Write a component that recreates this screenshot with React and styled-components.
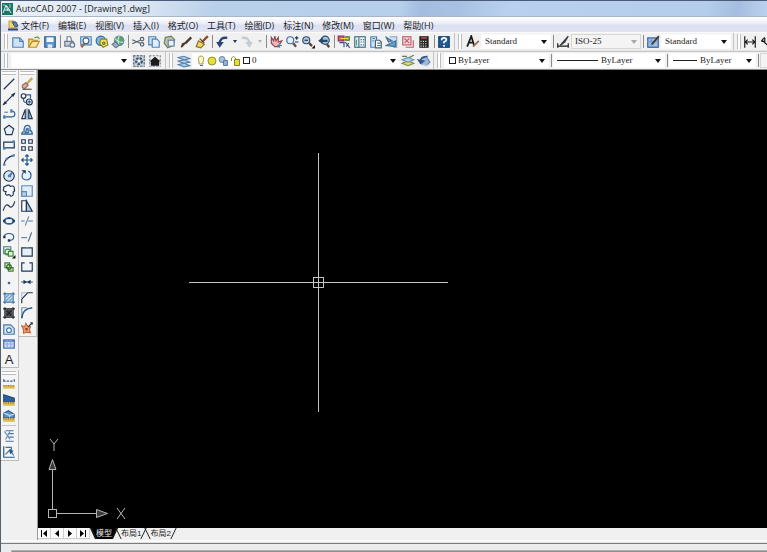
import React from "react";
import styled, { createGlobalStyle, css } from "styled-components";

const GlobalStyle = createGlobalStyle`
  * {
    box-sizing: border-box;
  }

  body {
    margin: 0;
    background: #f0f0f0;
    font-family: "Open Sans", "Noto Sans CJK SC", sans-serif;
    color: #1c1c1c;
  }
`;

const Window = styled.div`
  display: flex;
  flex-direction: column;
  height: 100vh;
  overflow: hidden;
  border-left: 1px solid #55606e;
  background: #f0f0f0;
`;

const TitleBar = styled.header`
  display: flex;
  align-items: center;
  gap: 3px;
  flex: none;
  height: 17px;
  padding-left: 1px;
  border-top: 1px solid #4a5c78;
  border-bottom: 1px solid #a9b6c8;
  background: linear-gradient(
    100deg,
    #e9f0f7 0%,
    #dce7f3 18%,
    #b9d0ea 28%,
    #b6cfeb 52%,
    #a3bcdf 55%,
    #a9c2e4 60%,
    #b9d1ee 66%,
    #b4cdeb 92%,
    #a5bde0 96%,
    #bcd2ee 100%
  );
`;

const Title = styled.h1`
  margin: 0;
  font-size: 9px;
  line-height: 14px;
  font-weight: 400;
  white-space: nowrap;
`;

const MenuBar = styled.nav`
  display: flex;
  align-items: center;
  flex: none;
  gap: 9px;
  height: 15px;
  padding-left: 7px;
  border-top: 2px solid #ffffff;
  background: linear-gradient(#f8f9fd 0, #eef1f9 30%, #dce1f1 50%, #dfe3f2 100%);
`;

const MenuItem = styled.button`
  padding: 0;
  border: 0;
  background: none;
  color: #1c1c1c;
  font-family: inherit;
  font-size: 9px;
  line-height: 12px;
  white-space: nowrap;
`;

const MenuIcon = styled.span`
  display: flex;
  margin-right: -7px;
`;

const ToolbarRow = styled.div`
  display: flex;
  align-items: center;
  flex: none;
  height: 19px;
  overflow: hidden;
  border-top: 1px solid ${(p) => (p.$line ? "#c6c6c6" : "#fafafa")};
  border-bottom: 1px solid ${(p) => (p.$line ? "#8e8e8e" : "#e4e4e4")};
  background: #f1f1f1;
`;

const Toolbar = styled.div`
  display: flex;
  align-items: center;
  flex: none;
  height: 17px;
  padding-right: ${(p) => p.$end || 2}px;
  border-right: 1px solid #c4c4c4;
`;

const Grip = styled.span`
  flex: none;
  width: 4px;
  height: 15px;
  margin: 0 ${(p) => p.$after || 3}px 0 3px;
  border: solid #bdbdbd;
  border-width: 0 1px;
  background: #ffffff;
`;

const Separator = styled.span`
  flex: none;
  width: 1px;
  height: 13px;
  margin: 0 1px 0 2px;
  background: #8a8a8a;
`;

const ToolButton = styled.button`
  display: flex;
  align-items: center;
  justify-content: center;
  flex: none;
  width: ${(p) => (p.$narrow ? 9 : 16)}px;
  height: ${(p) => (p.$fill ? "100%" : "15px")};
  padding: 0;
  border: 0;
  background: none;
  color: #223a5c;
  opacity: ${(p) => (p.$dim ? 0.4 : 1)};
`;

const Combo = styled.div`
  display: flex;
  align-items: center;
  flex: none;
  gap: 1px;
  width: ${(p) => p.$width}px;
  height: 15px;
  padding: 0 3px;
  border: 1px solid ${(p) => (p.$muted ? "#d6d6d6" : "#fbfbfb")};
  background: ${(p) => (p.$muted ? "#f4f4f4" : "#ffffff")};
`;

const Select = styled.select`
  appearance: none;
  flex: 1;
  min-width: 0;
  height: 13px;
  padding: 0;
  border: 0;
  background: none;
  color: #1c1c1c;
  font-family: "Liberation Serif", serif;
  font-size: 9px;
  line-height: 13px;
  opacity: 1;
`;

const Svg = styled.svg`
  display: block;
  flex: none;
  fill: none;
  stroke: currentColor;
  stroke-width: 1;
`;

const Body = styled.div`
  display: flex;
  flex: 1;
  min-height: 0;
`;

const SideBars = styled.aside`
  display: flex;
  align-items: flex-start;
  flex: none;
  width: 37px;
  border-right: 1px solid #9a9a9a;
  background: #f0f0f0;
`;

const SideColumn = styled.div`
  display: flex;
  flex-direction: column;
  gap: 2px;
  width: 18px;
`;

const SidePanel = styled.div`
  display: flex;
  flex-direction: column;
  align-items: flex-start;
  border: solid #bcbcbc;
  border-width: 0 1px 1px 0;
  background: #f4f4f4;
`;

const SideGrip = styled.span`
  width: 14px;
  height: 4px;
  margin: 1px;
  border: solid #bdbdbd;
  border-width: 1px 0;
  background: #ffffff;
`;

const SideTools = styled.div`
  display: grid;
  grid-auto-rows: 1fr;
  height: ${(p) => p.$height}px;
`;

const SideLine = styled.span`
  width: 14px;
  height: 1px;
  margin: 1px 1px 2px;
  background: #c4c4c4;
`;

const TextGlyph = styled.span`
  color: #1c1c1c;
  font-family: "Liberation Sans", sans-serif;
  font-size: 13px;
  line-height: 15px;
`;

const Workspace = styled.main`
  display: flex;
  flex-direction: column;
  flex: 1;
  min-width: 0;
`;

const Canvas = styled.div`
  position: relative;
  flex: 1;
  overflow: hidden;
  background: #000000;
`;

const Crosshair = styled.svg`
  position: absolute;
  left: 150px;
  top: 82px;
`;

const UcsIcon = styled.svg`
  position: absolute;
  left: 8px;
  bottom: 7px;
`;

const TabBar = styled.div`
  display: flex;
  flex: none;
  height: 12px;
  background: #f0f0f0;
`;

const TabNav = styled.button`
  display: flex;
  align-items: center;
  justify-content: center;
  width: 13px;
  height: 11px;
  padding: 0;
  border: solid #cfcfcf;
  border-width: 0 1px 1px 0;
  background: #fafafa;
  color: #000000;
`;

const Tab = styled.button`
  position: relative;
  height: 11px;
  margin-right: -3px;
  padding: 0 6px;
  border: 0;
  background: none;
  color: #1c1c1c;
  font-family: "Liberation Sans", "Noto Sans CJK SC", sans-serif;
  font-size: 8px;
  line-height: 10px;
  white-space: nowrap;

  &::before,
  &::after {
    content: "";
    position: absolute;
    top: 0;
    bottom: 0;
    width: 1px;
    background: #222222;
  }

  &::before {
    left: 3px;
    transform: skewX(26deg);
  }

  &::after {
    right: 3px;
    transform: skewX(-26deg);
  }

  ${(p) =>
    p.$active &&
    css`
      background: #000000;
      color: #e8e8e8;
      clip-path: polygon(0 0, 100% 0, calc(100% - 5px) 100%, 5px 100%);
    `}
`;

const CommandArea = styled.footer`
  flex: none;
  height: 12px;
  border-top: 2px solid #fafafa;
  padding-top: 1px;
  background: #e2e2e2;
`;

const CommandFrame = styled.div`
  height: 9px;
  padding: 6px 0 0 10px;
  border-top: 1px solid #7c7c7c;
  background: #ececec;
`;

const CommandEdge = styled.div`
  height: 2px;
  border-left: 1px solid #b5b5b5;
  border-top: 1px solid #b0b0b0;
  background: #8d8d8d;
`;

// Colours shared by the icon drawings
const ink = "#1f3654";
const blue = "#4f84b8";
const pale = "#cfe2f3";

const icons = {
  file: (
    <>
      <path d="M1.5 2.5h6l3 3v5h-9z" fill={pale} stroke={blue} />
      <path d="M7.5 2.5v3h3" stroke={blue} />
    </>
  ),
  open: (
    <>
      <path d="M1.5 10.5v-7h3l1 1h4" fill="#f3d27a" stroke="#b98d2c" />
      <path d="M1.5 10.5l3-5h6l-2.5 5z" fill="#fbe59b" stroke="#b98d2c" />
      <path d="M6.5 2.5q3-2 4 1" stroke="#4b8a3c" />
    </>
  ),
  save: (
    <>
      <path d="M1.5 1.5h9v9h-9z" fill="#5d93cc" stroke="#2c5d93" />
      <path d="M3 2h6v4h-6z" fill="#f2f7fc" stroke="none" />
      <path d="M4 8h4v3h-4z" fill="#dbe7f4" stroke="none" />
    </>
  ),
  print: (
    <>
      <path d="M3.5 5.5v-4h3l1 4" fill="#ffffff" stroke="#6f7f93" />
      <path d="M1.5 5.5h7l1 2v2h-8z" fill="#c4cfdc" stroke="#6a7b91" />
      <circle cx="8" cy="8.5" r="2" fill="#e5ebf2" stroke="#6a7b91" />
    </>
  ),
  preview: (
    <>
      <path d="M1.5 1.5h9v7h-9z" fill={pale} stroke={blue} />
      <circle cx="6" cy="5" r="2.5" fill="#f5faff" stroke="#46617f" />
      <path d="M4.500 7.500L2 10.500" stroke="#9c6a3c" strokeWidth="2" />
    </>
  ),
  publish: (
    <>
      <circle cx="5" cy="5" r="4" fill="#7fb3e0" stroke="#2f6da8" />
      <path d="M5 3.5h5l1 5-4 2-3-3z" fill="#f4df5d" stroke="#8f812a" />
      <circle cx="7.5" cy="7" r="1" stroke="#507c2c" />
    </>
  ),
  globe: (
    <>
      <circle cx="7" cy="5" r="4" fill="#5ba45a" stroke="#5c87ad" />
      <path d="M3.5 3q3 4 7 3M7 1q-2 4 0 8" stroke="#cfe5f5" />
      <path d="M1 8l3-2 3 3-3 2z" fill="#9eb2c9" stroke="#66788e" />
    </>
  ),
  cut: (
    <>
      <path d="M1 4l7 3M1 7.5l7-3" stroke="#55606d" />
      <circle cx="9.5" cy="3.5" r="1.5" stroke="#55606d" />
      <circle cx="9.5" cy="8" r="1.5" stroke="#55606d" />
    </>
  ),
  copyClip: (
    <>
      <path d="M1.5 1.5h6v7h-6z" fill={pale} stroke={blue} />
      <path d="M4.5 3.5h4l2 2v5h-6z" fill="#e1eefa" stroke={blue} />
    </>
  ),
  paste: (
    <>
      <path d="M2 2l5-1 3 3-1 5-5 2-3-4z" fill="#b9c3a6" stroke="#76805f" />
      <rect x="4.5" y="4.5" width="5" height="5" fill="#e9f1f8" stroke="#6886a5" />
    </>
  ),
  match: (
    <>
      <path d="M10.5 2l-5 5" stroke="#4e3a2c" strokeWidth="2" />
      <path d="M6 6.5l-4 4 1-3z" fill="#7a4b2c" stroke="#4e3a2c" />
    </>
  ),
  brush: (
    <>
      <path d="M11 1l-5 5" stroke="#8c4a2d" strokeWidth="2" />
      <path d="M3 5l5 3-3 3-4-1z" fill="#f0d469" stroke="#8c7326" />
      <path d="M4 3l4 4" stroke="#6d4630" />
    </>
  ),
  undo: (
    <>
      <path d="M10.5 2.5Q4 1.500 4 8" stroke="#2b4377" strokeWidth="2" />
      <path d="M1 6h6.500L4 11z" fill="#2b4377" stroke="none" />
    </>
  ),
  redo: (
    <>
      <path d="M1.5 2.5Q8 1.500 8 8" stroke="#8493a6" strokeWidth="2" />
      <path d="M4.5 6H11l-3 5z" fill="#8493a6" stroke="none" />
    </>
  ),
  pan: (
    <>
      <path d="M2 2l2 3 1-4 1 4 2-3 0 4 3-1-3 5H5L2 7z" fill="#f0b8b0" stroke="#8b4a56" />
      <path d="M7 9h4M9 7v4" stroke={blue} />
    </>
  ),
  zoomRt: (
    <>
      <circle cx="4.5" cy="4.5" r="3" fill="#e2f0fb" stroke="#4a7196" />
      <path d="M7 7l2.5 3" stroke="#5a5550" strokeWidth="2" />
      <path d="M8.5 2.5h3M10 1v3M8.5 6h3" stroke={ink} />
    </>
  ),
  zoomWin: (
    <>
      <circle cx="4.5" cy="4.5" r="3" fill="#b7cce2" stroke="#2e4d70" />
      <path d="M3 4.5h3" stroke={ink} />
      <path d="M7 7l2.5 2.5" stroke="#5c4530" strokeWidth="2" />
      <path d="M9 11.5h3v-3z" fill="#111111" stroke="none" />
    </>
  ),
  zoomPrev: (
    <>
      <circle cx="7" cy="4.5" r="3.500" fill="#a5c1de" stroke="#2e4d70" />
      <path d="M8.5 8l2 2.5" stroke="#5c4530" strokeWidth="2" />
      <path d="M1 5l4-3v2h4v2H5v2z" fill="#28476b" stroke="none" />
    </>
  ),
  properties: (
    <>
      <path d="M1 1h5v4h-5z" fill="#d7546c" stroke="#8a3b52" />
      <path d="M7.5 1.5h3v3h-3z" fill="#8ebf5e" stroke="#466b2b" />
      <path d="M2 6.5h4v4M7 6l4 5M8 10l2-3" stroke="#3e4e94" />
      <path d="M3 3h7" stroke="#f3d450" />
    </>
  ),
  designCenter: (
    <>
      <rect x="1.5" y="1.5" width="9" height="9" fill="#eaf4ee" stroke="#42708a" />
      <path d="M5 2v9M6.5 4h1M8.500 4h1M6.5 6h1M8.500 6h1M6.5 8.5h1M8.500 8.5h1" stroke="#42708a" />
      <path d="M3 4v5" stroke="#5aa06c" />
    </>
  ),
  palettes: (
    <>
      <path d="M1.5 1.5h5v9h-5z" fill={pale} stroke={blue} />
      <path d="M5.5 4.5h3.500l1.500 1.5v5h-5z" fill="#ffffff" stroke="#42618a" />
      <path d="M7 7h3M7 9h3M3 3h2M3 5h1" stroke="#517f53" />
    </>
  ),
  sheetSet: (
    <>
      <path d="M4 1.5h6v9h-3" fill={pale} stroke="#7fa3c4" />
      <path d="M1 2l5 3-3 1zM1 9l8-4v5z" fill="#6aa0c9" stroke="#467399" />
    </>
  ),
  markup: (
    <>
      <rect x="1.5" y="1.5" width="7" height="7" fill="#f8dce0" stroke="#c55a6a" />
      <path d="M3 3l4 4M7 3l-4 4M4 10.5h6.500v-6" stroke="#c55a6a" />
    </>
  ),
  calculator: (
    <>
      <rect x="2" y="1" width="8" height="10" fill="#252525" stroke="none" />
      <path d="M3.5 2.5h5" stroke="#e85d4a" />
      <path d="M3 5.5h6M3 7.5h6M3 9.5h6" stroke="#e0e0e0" strokeDasharray="1 1" />
    </>
  ),
  help: (
    <>
      <rect x="1.500" y="1.500" width="9" height="9" fill="#1f5a94" stroke="#153f6d" />
      <path d="M4 4.5q0-2 2-2t2 1.5q0 1-2 2v1M6 8.5v1.5" stroke="#ffffff" strokeWidth="1.5" />
    </>
  ),
  textStyle: (
    <>
      <path d="M1 10l3.5-9 2.5 8M2.5 6.5h4" stroke="#1b1b1b" strokeWidth="1.5" />
      <path d="M11 5l-3 3-2 2" stroke="#a06c4a" strokeWidth="1.5" />
    </>
  ),
  dimStyle: (
    <>
      <path d="M1 9.5h10M1.500 7v4M10.500 7v4" stroke="#1b1b1b" />
      <path d="M10.500 1l-3 5-4 3z" fill="#6a6a6a" stroke="#3c3c3c" />
    </>
  ),
  tableStyle: (
    <>
      <rect x="1.5" y="2.5" width="9" height="8" fill="#9cc0e8" stroke="#315f9b" />
      <path d="M1 5.5h9M4.5 3v7" stroke="#6f9bcf" />
      <path d="M11 1l-6 7" stroke="#45372d" strokeWidth="1.5" />
    </>
  ),
  dimLinear: (
    <path d="M1.5 1v10M10.500 1v10M2 6h8M4 4L2 6l2 2M8 4l2 2-2 2" stroke="#1b1b1b" />
  ),
  dimAligned: <path d="M2 5l3-3M2.5 4.5l7 6M5 2.5v3h-3" stroke="#1b1b1b" />,
  workspace: (
    <>
      <rect x="1" y="1" width="10" height="10" fill="#c9d2d9" stroke="none" />
      <path d="M1 1.5h10M1 10.5h10M1.5 1v10M10.5 1v10" stroke="#55626e" strokeDasharray="2 1" />
      <circle cx="6" cy="6" r="2.5" fill="#b9cfe2" stroke="#3d566e" strokeWidth="2" strokeDasharray="2 1" />
      <circle cx="6" cy="6" r="1" fill="#ffffff" stroke="none" />
    </>
  ),
  workspaceHome: (
    <>
      <path d="M1 1.5h10M1 10.5h10M1.5 1v10M10.5 1v10" stroke="#7c8995" strokeDasharray="2 1" />
      <path d="M2.500 6L6 3l3.500 3H9v3.500H3V6z" fill="#1d1d1d" stroke="#1d1d1d" />
    </>
  ),
  layers: (
    <path
      d="M1 3l5-1 5 2-5 1zM1 6l5-1 5 2-5 1zM1 9l5-1 5 2-5 1z"
      fill="#b8d3ec"
      stroke="#5a86b0"
    />
  ),
  layerPrev: (
    <>
      <path d="M1 8l5-2 5 2-5 2z" fill="#e8da6d" stroke="#7f8d3b" />
      <path d="M1 5l5-2 5 2-5 2z" fill="#b9d3ec" stroke="#6d92b3" />
      <path d="M1 2h4M7 3l4-2" stroke="#5a7f4c" />
    </>
  ),
  layerStates: (
    <>
      <path d="M4 3l4-1 3 5-3 3-5-2z" fill="#9db9dc" stroke="#6684ad" />
      <path d="M9 2q-5 0-6 3M1 5l2 3 3-2z" fill="#35558c" stroke="#35558c" />
      <path d="M5 9l4 1 2-2" stroke="#c5d8ee" />
    </>
  ),
  line: <path d="M1.5 10.5l9-9" stroke={ink} />,
  xline: (
    <>
      <path d="M1 11l10-10" stroke={ink} />
      <path d="M10.500 1.500l-2 1 1 1zM1.500 10.500l2-1-1-1z" fill={ink} stroke={ink} />
    </>
  ),
  pline: (
    <>
      <path d="M1 8.5h7q3 0 3-2.5t-3-2.5" stroke="#2c5a8c" />
      <path d="M2 4.5h3" stroke={blue} />
      <path d="M1 7h2v3h-2zM7 2h2v3h-2z" fill={blue} stroke="none" />
    </>
  ),
  polygon: <path d="M6 2l4 3-1.5 5h-5L2 5z" fill="#e5eff8" stroke={ink} />,
  rectangle: (
    <>
      <path d="M1.5 3.5h9v5h-9z" fill="#eef4fa" stroke={ink} />
      <path d="M9 2h2v2h-2zM1 8h2v2h-2z" fill={blue} stroke="none" />
    </>
  ),
  arc: (
    <>
      <path d="M1.5 10.5q1-7 9-8.5" stroke={ink} />
      <path d="M1 9h2v2h-2zM3 4h2v2h-2zM9 1h2v2h-2z" fill={blue} stroke="none" />
    </>
  ),
  circle: (
    <>
      <circle cx="6" cy="6" r="4.5" fill="#dceaf6" stroke={ink} />
      <path d="M6 6l3-3M5 6h2v1" stroke={blue} strokeWidth="2" />
    </>
  ),
  cloud: (
    <path
      d="M3 2q3-2 4 0 4-1 3.500 2 1 2-1 3 1 3-2 3.500-1-2-2.500-1-3 0-1.500-3Q0 6 1.500 4 1 2 3 2z"
      fill="#f4f8fc"
      stroke={ink}
    />
  ),
  spline: <path d="M1 10q2-7 5-4t5-4" stroke={ink} />,
  ellipse: (
    <>
      <ellipse cx="6" cy="6" rx="4" ry="2.500" fill="#e9f2fa" stroke="#2b5e92" strokeWidth="1.5" />
      <path d="M1 5h2v2h-2zM9 5h2v2h-2zM5 3h2v1h-2z" fill={ink} stroke="none" />
    </>
  ),
  ellipseArc: (
    <>
      <path d="M2 6q0-3 4-3t4 3q0 3-4 3" stroke="#2b5e92" />
      <path d="M1 5h2v2h-2zM5 8h2v2h-2z" fill={ink} stroke="none" />
    </>
  ),
  insertBlock: (
    <>
      <path d="M1.5 1.5h6v6h-6z" fill="#e8f1ea" stroke="#4b7896" />
      <circle cx="5" cy="6" r="2.5" stroke="#3f8b3c" />
      <path d="M5.5 5.5h4v4h-4z" fill="#e0f0da" stroke="#3f8b3c" />
      <path d="M8.500 11.500h3v-3z" fill="#111111" stroke="none" />
    </>
  ),
  makeBlock: (
    <>
      <path d="M2.500 2.5h4v4h-4z" fill="#d6ecc8" stroke="#3f7e3c" />
      <path d="M5.5 6.5h4v3h-4z" fill="#f5e8a0" stroke="#3f7e3c" />
      <circle cx="6" cy="6" r="2" stroke="#2f682c" />
    </>
  ),
  point: <path d="M5 5h2v2h-2z" fill="#3d6892" stroke="none" />,
  hatch: (
    <>
      <path d="M3 3h6v6h-6z" fill="#d3e4f4" stroke="none" />
      <path d="M2.5 1v10M9.5 1v10M1 2.5h10M1 9.5h10" stroke="#3d6f9f" />
      <path d="M3 9l6-6M3 6l3-3M6 9l3-3" stroke="#6fa0cf" />
    </>
  ),
  gradient: (
    <>
      <path d="M3 3h6v6h-6z" fill="#45484d" stroke="none" />
      <path d="M2.5 1v10M9.5 1v10M1 2.5h10M1 9.5h10" stroke="#16181c" />
      <path d="M4 4l4 4M8 4l-4 4" stroke="#1e2126" />
    </>
  ),
  region: (
    <>
      <path d="M1.5 2.5h6l3 3v5h-9z" fill={pale} stroke="#4b7ba8" />
      <circle cx="6" cy="7" r="2" fill="#ffffff" stroke="#4b7ba8" />
    </>
  ),
  table: (
    <>
      <rect x="1.5" y="2.5" width="9" height="7" fill="#cfdcf8" stroke="#4169b0" />
      <path d="M1 3.5h10" stroke="#4169b0" />
      <path d="M4.5 3v6M7.5 3v6M2 6h8" stroke="#91abe0" />
    </>
  ),
  erase: (
    <>
      <path d="M10.5 1l-6 6" stroke="#c9a75c" strokeWidth="2" />
      <path d="M2 7l3-2 2 2-3 3-2-1z" fill="#e0aca2" stroke="#9c6f5d" />
      <path d="M2 10.5h8" stroke="#4b4b4b" />
    </>
  ),
  copy: (
    <>
      <circle cx="3" cy="3.500" r="2" stroke={ink} />
      <circle cx="8" cy="8.5" r="2.5" stroke={ink} />
      <path d="M5 2.5h4v3M3 6q0 3 2 3M8 7v3M6.5 8.5h3" stroke="#2d5f92" />
    </>
  ),
  mirror: (
    <>
      <path d="M4.5 2v8h-3z" stroke={ink} />
      <path d="M7.5 2v8h3z" fill="#a9c8e4" stroke={ink} />
      <path d="M6 1v10" stroke="#7b8da0" />
    </>
  ),
  offset: (
    <>
      <path d="M1.500 9.500q0-2 2-2Q3 2 6.500 2q3 0 2 4.500 2 0 2 3z" fill={pale} stroke="#2b5e92" />
      <path d="M4.500 8.500q1-1 1-3.500h1.500v3.500z" stroke="#2b5e92" />
    </>
  ),
  array: (
    <path
      d="M1.5 1.5h3v3h-3zM7.5 1.5h3v3h-3zM1.5 7.5h3v3h-3zM7.5 7.5h3v3h-3z"
      fill="#ffffff"
      stroke={ink}
    />
  ),
  move: (
    <path
      d="M6 1.500v9M1.500 6h9M4.5 3L6 1.500 7.500 3M4.5 9L6 10.500 7.500 9M3 4.5L1.500 6 3 7.500M9 4.5L10.500 6 9 7.500"
      stroke="#25568a"
    />
  ),
  rotate: (
    <>
      <path d="M3 3.500q-2.500 4 0 6 4 2 6-1Q10.500 4 7 2.500" fill="#e6f1fa" stroke="#2b5e92" />
      <path d="M1 2h4v3z" fill={ink} stroke="none" />
    </>
  ),
  scale: (
    <>
      <path d="M1.5 1.5h9v9h-9z" fill="#e1edf8" stroke="#5f8bb5" />
      <path d="M1.5 6.5h4v4h-4z" fill="#b6d0ea" stroke="#5f8bb5" />
    </>
  ),
  stretch: (
    <>
      <path d="M1.5 1.5h4v9h-4z" fill="#ffffff" stroke={ink} />
      <path d="M5.5 1.5l5 9h-5z" fill="#a9c8e4" stroke={ink} />
    </>
  ),
  trim: (
    <>
      <path d="M1 6h3M7 6h4" stroke="#4a7fb2" />
      <path d="M4.500 10l3-8" stroke="#6487aa" />
    </>
  ),
  extend: (
    <>
      <path d="M1 6.5h5" stroke="#6487aa" />
      <path d="M7 10l3-8" stroke="#47688c" />
    </>
  ),
  breakPoint: (
    <>
      <path d="M1.5 2.5h9v7h-9z" fill="#e6eef6" stroke={ink} />
      <path d="M5 2h2v1h-2z" fill="#6aa0d6" stroke="none" />
    </>
  ),
  breakGap: <path d="M4 2.500H1.500v7h9v-7H8" fill="#eef4fa" stroke={ink} />,
  join: (
    <>
      <path d="M1 6h10" stroke="#3c6ea0" />
      <path d="M3 4v4l3-2zM9 4v4L6 6z" fill={ink} stroke="none" />
    </>
  ),
  chamfer: (
    <>
      <path d="M1.5 10.500V7l5-5.5h4.500" stroke={ink} />
      <path d="M1.5 6V1.5H6" stroke="#a9bccf" />
    </>
  ),
  fillet: (
    <>
      <path d="M1.5 10.500q0-8 9-9" stroke="#2b5e92" strokeWidth="1.5" />
      <path d="M1.5 6V1.5H6" stroke="#7b8da0" />
    </>
  ),
  explode: (
    <>
      <path d="M1.500 4l2.500 1 1-3 2 3h2L8 7.500l1 2.500-3-.5-3 1V7.500z" fill="#f0a36c" stroke="#c46a3a" />
      <path d="M7 5l3.500-3.500M9 1.500h1.500V3" stroke={ink} />
      <path d="M4.500 6h2v2h-2z" fill="#7b4a34" stroke="none" />
    </>
  ),
  distance: (
    <>
      <path d="M1 3.5h10M1.5 2v3M10.5 2v3" stroke="#2c5687" strokeDasharray="2 1" />
      <path d="M1 7h10v3h-10z" fill="#e3be4b" stroke="none" />
      <path d="M1 7.5h10" stroke="#7d6a24" strokeDasharray="1 1" />
    </>
  ),
  area: (
    <>
      <path d="M1.5 7.5v-6l9 3v3z" fill="#2f5f9a" stroke="#1f4a7d" />
      <path d="M1 8h10v3h-10z" fill="#e3be4b" stroke="none" />
      <path d="M1 8.5h10" stroke="#7d6a24" strokeDasharray="1 1" />
    </>
  ),
  massProps: (
    <>
      <path d="M1.5 7.500v-4l4-2 5 3v3z" fill="#5d93c5" stroke="#2a5f96" />
      <path d="M1.5 3.500l5 2 4-1M6.5 5v2" stroke="#cfe4f6" />
      <path d="M1 8h10v3h-10z" fill="#e3be4b" stroke="none" />
      <path d="M1 8.5h10" stroke="#7d6a24" strokeDasharray="1 1" />
    </>
  ),
  list: (
    <>
      <path d="M3 1.5h7M5 4h5M5 7h5M3 10.500h7" stroke="#48749f" />
      <path d="M2 2l5 7M7 2L3 9" stroke="#6f95bb" />
    </>
  ),
  locate: (
    <>
      <path d="M1.5 1v9.5h9.500" stroke="#24588c" />
      <path d="M3 2h5v5M3 8l4-4 3 5" stroke="#3c6ea0" />
      <path d="M6 4l4 1-3 3z" fill="#24588c" stroke="none" />
    </>
  ),
};

function Icon({ name }) {
  return (
    <Svg width="14" height="14" viewBox="0 0 12 12" aria-hidden="true">
      {icons[name]}
    </Svg>
  );
}

function Arrow({ muted }) {
  return (
    <Svg width="6" height="4" viewBox="0 0 6 4" aria-hidden="true">
      <path d="M0 0h6L3 4z" fill={muted ? "#a8a8a8" : "#111111"} stroke="none" />
    </Svg>
  );
}

// "|" draws a separator, "v" and "v-" a small drop-down arrow
function Tools({ items }) {
  return items.map((item, i) => {
    if (item === "|") return <Separator key={i} />;
    if (item === "v" || item === "v-") {
      return (
        <ToolButton key={i} $narrow aria-label="more">
          <Svg width="4" height="3" viewBox="0 0 4 3" aria-hidden="true">
            <path d="M0 0h4L2 3z" fill={item === "v" ? ink : "#b5b5b5"} stroke="none" />
          </Svg>
        </ToolButton>
      );
    }
    return (
      <ToolButton key={i} aria-label={item} $dim={item === "redo"}>
        <Icon name={item} />
      </ToolButton>
    );
  });
}

function ComboBox({ label, value, width, muted, children }) {
  return (
    <Combo $width={width} $muted={muted}>
      {children}
      <Select aria-label={label}>
        <option>{value}</option>
      </Select>
      <Arrow muted={muted} />
    </Combo>
  );
}

function LineSample({ length }) {
  return (
    <Svg width={length} height="3" viewBox={`0 0 ${length} 3`} aria-hidden="true">
      <path d={`M0 1.5h${length - 2}`} stroke="#222222" />
    </Svg>
  );
}

function Swatch() {
  return (
    <Svg width="9" height="9" viewBox="0 0 9 9" aria-hidden="true">
      <rect x="1.5" y="1.5" width="6" height="6" fill="#ffffff" stroke="#222222" />
    </Svg>
  );
}

function LayerFlags() {
  return (
    <Svg width="45" height="12" viewBox="0 0 45 12" aria-hidden="true">
      <path d="M3 7q-2-6 2-6t2 6v2H3z" fill="#fdf6bd" stroke="#a39a52" />
      <path d="M4 10.5h3" stroke="#5e6a7a" />
      <circle cx="16" cy="6" r="4" fill="#e6dd3a" stroke="#8c9a2a" />
      <circle cx="26" cy="4.5" r="3" fill="#a9c4dd" stroke="#6886a5" />
      <path d="M27.5 5.5h4v5h-4z" fill="#8fb4d6" stroke="#587da3" />
      <path d="M35.5 6V3q2-3 4 0v2" stroke="#8c8f2a" />
      <path d="M38.500 4.500h5v6h-5z" fill="#e6dd3a" stroke="#83862a" />
    </Svg>
  );
}

function SideToolGroup({ items, height }) {
  return (
    <SideTools $height={height}>
      {items.map((name) => (
        <ToolButton key={name} $fill aria-label={name}>
          {name === "A" ? <TextGlyph>A</TextGlyph> : <Icon name={name} />}
        </ToolButton>
      ))}
    </SideTools>
  );
}

const menus = [
  "文件(F)",
  "编辑(E)",
  "视图(V)",
  "插入(I)",
  "格式(O)",
  "工具(T)",
  "绘图(D)",
  "标注(N)",
  "修改(M)",
  "窗口(W)",
  "帮助(H)",
];

const standardTools = [
  "file", "open", "save", "|",
  "print", "preview", "publish", "globe", "|",
  "cut", "copyClip", "paste", "match", "brush", "|",
  "undo", "v", "redo", "v-", "|",
  "pan", "zoomRt", "zoomWin", "zoomPrev", "|",
  "properties", "designCenter", "palettes", "sheetSet", "markup", "calculator", "|",
  "help",
];

const drawTools = [
  "line", "xline", "pline", "polygon", "rectangle", "arc", "circle", "cloud",
  "spline", "ellipse", "ellipseArc", "insertBlock", "makeBlock", "point",
  "hatch", "gradient", "region", "table", "A",
];

const modifyTools = [
  "erase", "copy", "mirror", "offset", "array", "move", "rotate", "scale",
  "stretch", "trim", "extend", "breakPoint", "breakGap", "join", "chamfer",
  "fillet", "explode",
];

const tabArrows = {
  first: "M1 0h1v7h-1zM7 0v7L3 3.5z",
  previous: "M6 0v7L2 3.5z",
  next: "M2 0v7L6 3.5z",
  last: "M6 0h1v7h-1zM1 0v7L5 3.5z",
};

function App() {
  return (
    <Window>
      <GlobalStyle />
      <TitleBar>
        <Svg width="11" height="12" viewBox="0 0 11 12" aria-hidden="true">
          <rect x="0" y="0" width="11" height="12" fill="#1f7468" stroke="none" />
          <path d="M1 10l3-8 2 6M5 3l4 7M2 7h6" stroke="#d9f0ea" />
          <path d="M8 1v4M1 2h2" stroke="#8fd0c2" />
        </Svg>
        <Title>AutoCAD 2007 - [Drawing1.dwg]</Title>
      </TitleBar>

      <MenuBar>
        <MenuIcon>
          <Svg width="11" height="11" viewBox="0 0 11 11" aria-hidden="true">
            <path d="M1 1h5l3 3v4H1z" fill="#f6d469" stroke="#c39a35" />
            <path d="M4 2l4 0 2 4-3 1z" fill="#5a83b8" stroke="#2f558b" />
            <path d="M0 9.5h10" stroke="#2b4a7c" strokeWidth="2" />
          </Svg>
        </MenuIcon>
        {menus.map((menu) => (
          <MenuItem key={menu}>{menu}</MenuItem>
        ))}
      </MenuBar>

      <ToolbarRow>
        <Toolbar>
          <Grip $after={2} />
          <Tools items={standardTools} />
        </Toolbar>
        <Toolbar>
          <Grip />
          <Tools items={["textStyle"]} />
          <ComboBox label="Text style" value="Standard" width={70} />
          <Separator />
          <Tools items={["dimStyle"]} />
          <ComboBox label="Dimension style" value="ISO-25" width={70} muted />
          <Separator />
          <Tools items={["tableStyle"]} />
          <ComboBox label="Table style" value="Standard" width={70} />
        </Toolbar>
        <Toolbar>
          <Grip $after={1} />
          <Tools items={["dimLinear", "dimAligned"]} />
        </Toolbar>
      </ToolbarRow>

      <ToolbarRow $line>
        <Toolbar>
          <Grip />
          <ComboBox label="Workspace" value="" width={120} />
          <Tools items={["workspace", "workspaceHome"]} />
        </Toolbar>
        <Toolbar $end={1}>
          <Grip />
          <Tools items={["layers"]} />
          <ComboBox label="Layer" value="0" width={208}>
            <LayerFlags />
            <Swatch />
          </ComboBox>
          <Tools items={["layerPrev", "layerStates"]} />
        </Toolbar>
        <Toolbar>
          <Grip />
          <ComboBox label="Color" value="ByLayer" width={105}>
            <Swatch />
          </ComboBox>
          <Separator />
          <ComboBox label="Linetype" value="ByLayer" width={112}>
            <LineSample length={43} />
          </ComboBox>
          <Separator />
          <ComboBox label="Lineweight" value="ByLayer" width={87}>
            <LineSample length={26} />
          </ComboBox>
          <Separator />
          <ComboBox label="Plot style" value="" width={90} muted />
        </Toolbar>
      </ToolbarRow>

      <Body>
        <SideBars>
          <SideColumn>
            <SidePanel>
              <SideGrip />
              <SideToolGroup items={drawTools} height={291} />
            </SidePanel>
            <SidePanel>
              <SideGrip />
              <SideToolGroup items={["distance", "area", "massProps"]} height={48} />
              <SideLine />
              <SideToolGroup items={["list", "locate"]} height={32} />
            </SidePanel>
          </SideColumn>
          <SideColumn>
            <SidePanel>
              <SideGrip />
              <SideToolGroup items={modifyTools} height={260} />
            </SidePanel>
          </SideColumn>
        </SideBars>

        <Workspace>
          <Canvas>
            <Crosshair
              width="261"
              height="261"
              viewBox="0 0 261 261"
              fill="none"
              stroke="#c4c4c4"
              aria-label="Crosshair"
            >
              <path d="M130.5 1v259M1 130.5h259" />
              <rect x="125.5" y="125.5" width="10" height="10" />
            </Crosshair>
            <UcsIcon
              width="82"
              height="84"
              viewBox="0 0 82 84"
              fill="none"
              stroke="#b4b4b4"
              aria-label="UCS"
            >
              <rect x="2.5" y="72.5" width="8" height="8" />
              <path d="M6.5 72V23M11 76.5h50" />
              <path d="M6.5 22.5l3.5 10h-7zM61.5 76.5l-11-4v8z" fill="#3a3a3a" />
              <path d="M4 2l4 5 4-5M8 7v7M71 71l8 11M79 71l-8 11" />
            </UcsIcon>
          </Canvas>
          <TabBar>
            {Object.keys(tabArrows).map((key) => (
              <TabNav key={key} aria-label={key}>
                <Svg width="8" height="7" viewBox="0 0 8 7" aria-hidden="true">
                  <path d={tabArrows[key]} fill="#000000" stroke="none" />
                </Svg>
              </TabNav>
            ))}
            <Tab $active>模型</Tab>
            <Tab>布局1</Tab>
            <Tab>布局2</Tab>
          </TabBar>
        </Workspace>
      </Body>

      <CommandArea>
        <CommandFrame>
          <CommandEdge />
        </CommandFrame>
      </CommandArea>
    </Window>
  );
}

export default App;
